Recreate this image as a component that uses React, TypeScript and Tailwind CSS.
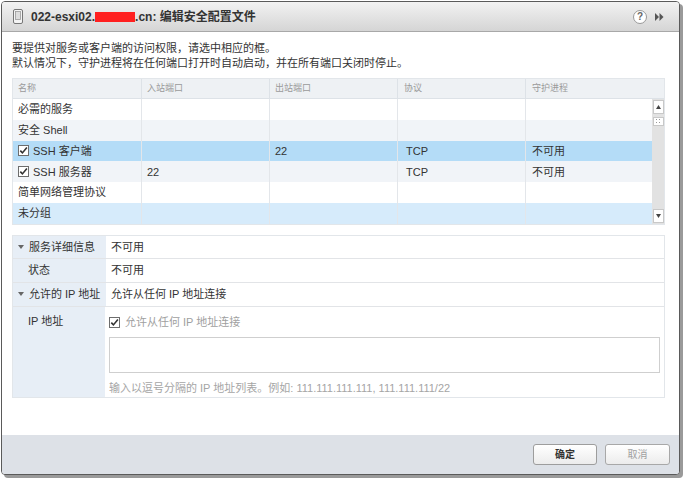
import React from "react";

const FONT = { fontFamily: '"Liberation Sans", Arial, "Noto Sans CJK SC", sans-serif' };

function Check({ dim = false }: { dim?: boolean }) {
  return (
    <svg width="11" height="11" viewBox="0 0 11 11" className="shrink-0">
      <rect x="0.5" y="0.5" width="10" height="10" fill="#fff" stroke={dim ? "#8a8a8a" : "#6d6d6d"} />
      <path d="M2.3 5.6 L4.4 7.9 L8.9 2.4" fill="none" stroke="#333" strokeWidth="1.6" />
    </svg>
  );
}

const rows = [
  { name: "必需的服务", inP: "", outP: "", proto: "", daemon: "", bg: "bg-white", check: false },
  { name: "安全 Shell", inP: "", outP: "", proto: "", daemon: "", bg: "bg-[#f1f4f8]", check: false },
  { name: "SSH 客户端", inP: "", outP: "22", proto: "TCP", daemon: "不可用", bg: "bg-[#b4dcf7]", check: true },
  { name: "SSH 服务器", inP: "22", outP: "", proto: "TCP", daemon: "不可用", bg: "bg-[#f1f4f8]", check: true },
  { name: "简单网络管理协议", inP: "", outP: "", proto: "", daemon: "", bg: "bg-white", check: false },
  { name: "未分组", inP: "", outP: "", proto: "", daemon: "", bg: "bg-[#d6ebfb]", check: false },
];

export default function App() {
  return (
    <div className="w-[685px] h-[480px] bg-white relative overflow-hidden" style={FONT}>
      <div className="absolute left-[1px] top-[1px] w-[679px] h-[474px] border border-[#5a5a5a] rounded-[4px] bg-white flex flex-col overflow-hidden shadow-[3px_3px_0_#9a9a9a]">
        {/* title bar */}
        <div className="h-[30px] shrink-0 flex items-center border-b border-[#a8a8a8] bg-gradient-to-b from-[#f2f2f2] to-[#d5d5d5] px-[11px]">
          <svg width="10" height="15" viewBox="0 0 10 15" className="mr-[8px]">
            <rect x="0.5" y="0.5" width="9" height="14" rx="1.5" fill="#f4f4f4" stroke="#777" />
            <rect x="2.5" y="2.5" width="5" height="8" fill="#ddd" stroke="#999" strokeWidth="0.8" />
          </svg>
          <div className="flex items-center text-[12px] font-bold text-[#333]">
            <span>022-esxi02.</span>
            <span className="inline-block w-[40px] h-[10px] bg-[#ff2020]" />
            <span>.cn: 编辑安全配置文件</span>
          </div>
          <div className="ml-auto flex items-center gap-[8px] pr-[4px]">
            <div className="w-[14px] h-[14px] rounded-full border border-[#999] bg-white flex items-center justify-center text-[10px] font-bold text-[#666] leading-none">?</div>
            <svg width="9" height="8" viewBox="0 0 9 8">
              <path d="M0 0 L4 4 L0 8 Z M4.5 0 L8.5 4 L4.5 8 Z" fill="#555" />
            </svg>
          </div>
        </div>

        {/* body */}
        <div className="flex-1 bg-white px-[10px] pt-[9px]">
          <div className="text-[11px] leading-[15px] text-[#333]">
            <div>要提供对服务或客户端的访问权限，请选中相应的框。</div>
            <div>默认情况下，守护进程将在任何端口打开时自动启动，并在所有端口关闭时停止。</div>
          </div>

          {/* table */}
          <div className="mt-[7px] w-[653px] border border-[#e2e6ea] flex flex-col">
            <div className="flex h-[20px] bg-[#eef1f4] border-b border-[#dde2e7] text-[9px] text-[#9a9a9a] items-center">
              <div className="w-[128px] pl-[5px]">名称</div>
              <div className="w-[128px] pl-[5px] border-l border-[#dde2e7] h-full flex items-center">入站端口</div>
              <div className="w-[128px] pl-[5px] border-l border-[#dde2e7] h-full flex items-center">出站端口</div>
              <div className="w-[128px] pl-[6px] border-l border-[#dde2e7] h-full flex items-center">协议</div>
              <div className="flex-1 pl-[6px] border-l border-[#dde2e7] h-full flex items-center">守护进程</div>
            </div>
            <div className="flex">
              <div className="w-[640px] flex flex-col">
                {rows.map((r, i) => (
                  <div key={i} className={`flex h-[20.8px] items-center text-[11px] text-[#333] ${r.bg}`}>
                    <div className="w-[128px] pl-[5px] flex items-center gap-[4px]">
                      {r.check && <Check />}
                      <span>{r.name}</span>
                    </div>
                    <div className="w-[128px] pl-[5px] border-l border-[#e3e6ea] h-full flex items-center">{r.inP}</div>
                    <div className="w-[128px] pl-[5px] border-l border-[#e3e6ea] h-full flex items-center">{r.outP}</div>
                    <div className="w-[128px] pl-[8px] border-l border-[#e3e6ea] h-full flex items-center">{r.proto}</div>
                    <div className="flex-1 pl-[6px] border-l border-[#e3e6ea] h-full flex items-center">{r.daemon}</div>
                  </div>
                ))}
              </div>
              {/* scrollbar */}
              <div className="w-[12px] bg-[#e2e2e2] flex flex-col items-center pt-[1px] pb-[1px]">
                <div className="w-[11px] h-[14px] bg-white border border-[#c8c8c8] flex items-center justify-center">
                  <svg width="5" height="4" viewBox="0 0 5 4"><path d="M0 4 L2.5 0 L5 4 Z" fill="#444" /></svg>
                </div>
                <div className="mt-[3px] w-[11px] h-[9px] bg-white border border-[#c8c8c8] flex items-center justify-center">
                  <svg width="5" height="5" viewBox="0 0 5 5"><g fill="#999"><rect x="0" y="0" width="1" height="1" /><rect x="3" y="0" width="1" height="1" /><rect x="0" y="3" width="1" height="1" /><rect x="3" y="3" width="1" height="1" /></g></svg>
                </div>
                <div className="flex-1" />
                <div className="w-[11px] h-[14px] bg-white border border-[#c8c8c8] flex items-center justify-center">
                  <svg width="5" height="4" viewBox="0 0 5 4"><path d="M0 0 L2.5 4 L5 0 Z" fill="#444" /></svg>
                </div>
              </div>
            </div>
          </div>

          {/* details */}
          <div className="mt-[10px] w-[653px] border border-[#e2e6ea] flex flex-col text-[11px] text-[#333]">
            <div className="flex h-[23px] border-b border-[#e2e4e7]">
              <div className="w-[93px] bg-[#e7eef6] flex items-center pl-[5px] gap-[5px]">
                <svg width="6" height="4" viewBox="0 0 6 4"><path d="M0 0 L6 0 L3 4 Z" fill="#666" /></svg>
                <span>服务详细信息</span>
              </div>
              <div className="flex-1 flex items-center pl-[5px]">不可用</div>
            </div>
            <div className="flex h-[24px] border-b border-[#e2e4e7]">
              <div className="w-[93px] bg-[#e7eef6] flex items-center pl-[15px]">状态</div>
              <div className="flex-1 flex items-center pl-[5px]">不可用</div>
            </div>
            <div className="flex h-[24px] border-b border-[#e2e4e7]">
              <div className="w-[93px] bg-[#e7eef6] flex items-center pl-[5px] gap-[5px] whitespace-nowrap">
                <svg width="6" height="4" viewBox="0 0 6 4"><path d="M0 0 L6 0 L3 4 Z" fill="#666" /></svg>
                <span>允许的 IP 地址</span>
              </div>
              <div className="flex-1 flex items-center pl-[5px]">允许从任何 IP 地址连接</div>
            </div>
            <div className="flex h-[90px]">
              <div className="w-[93px] bg-[#e7eef6] pl-[15px] pt-[6px]">IP 地址</div>
              <div className="flex-1 pl-[4px] pr-[4px] pt-[7px] flex flex-col">
                <div className="flex items-center gap-[5px] text-[#a0a0a0] text-[11px]">
                  <Check />
                  <span>允许从任何 IP 地址连接</span>
                </div>
                <div className="mt-[7px] h-[37px] border border-[#cfcfcf] bg-white w-[551px]" />
                <div className="mt-[7px] text-[11px] text-[#a5a5a5]">输入以逗号分隔的 IP 地址列表。例如: 111.111.111.111, 111.111.111/22</div>
              </div>
            </div>
          </div>
        </div>

        {/* footer */}
        <div className="h-[39px] shrink-0 bg-[#dde1e7] flex items-center justify-end gap-[8px] pr-[9px]">
          <div className="w-[64px] h-[21px] rounded-[3px] border border-[#9d9d9d] bg-gradient-to-b from-white to-[#ececec] flex items-center justify-center text-[10px] font-bold text-[#333]">确定</div>
          <div className="w-[65px] h-[21px] rounded-[3px] border border-[#a8a8a8] bg-gradient-to-b from-white to-[#ececec] flex items-center justify-center text-[10px] text-[#a0a0a0]">取消</div>
        </div>
      </div>
    </div>
  );
}
